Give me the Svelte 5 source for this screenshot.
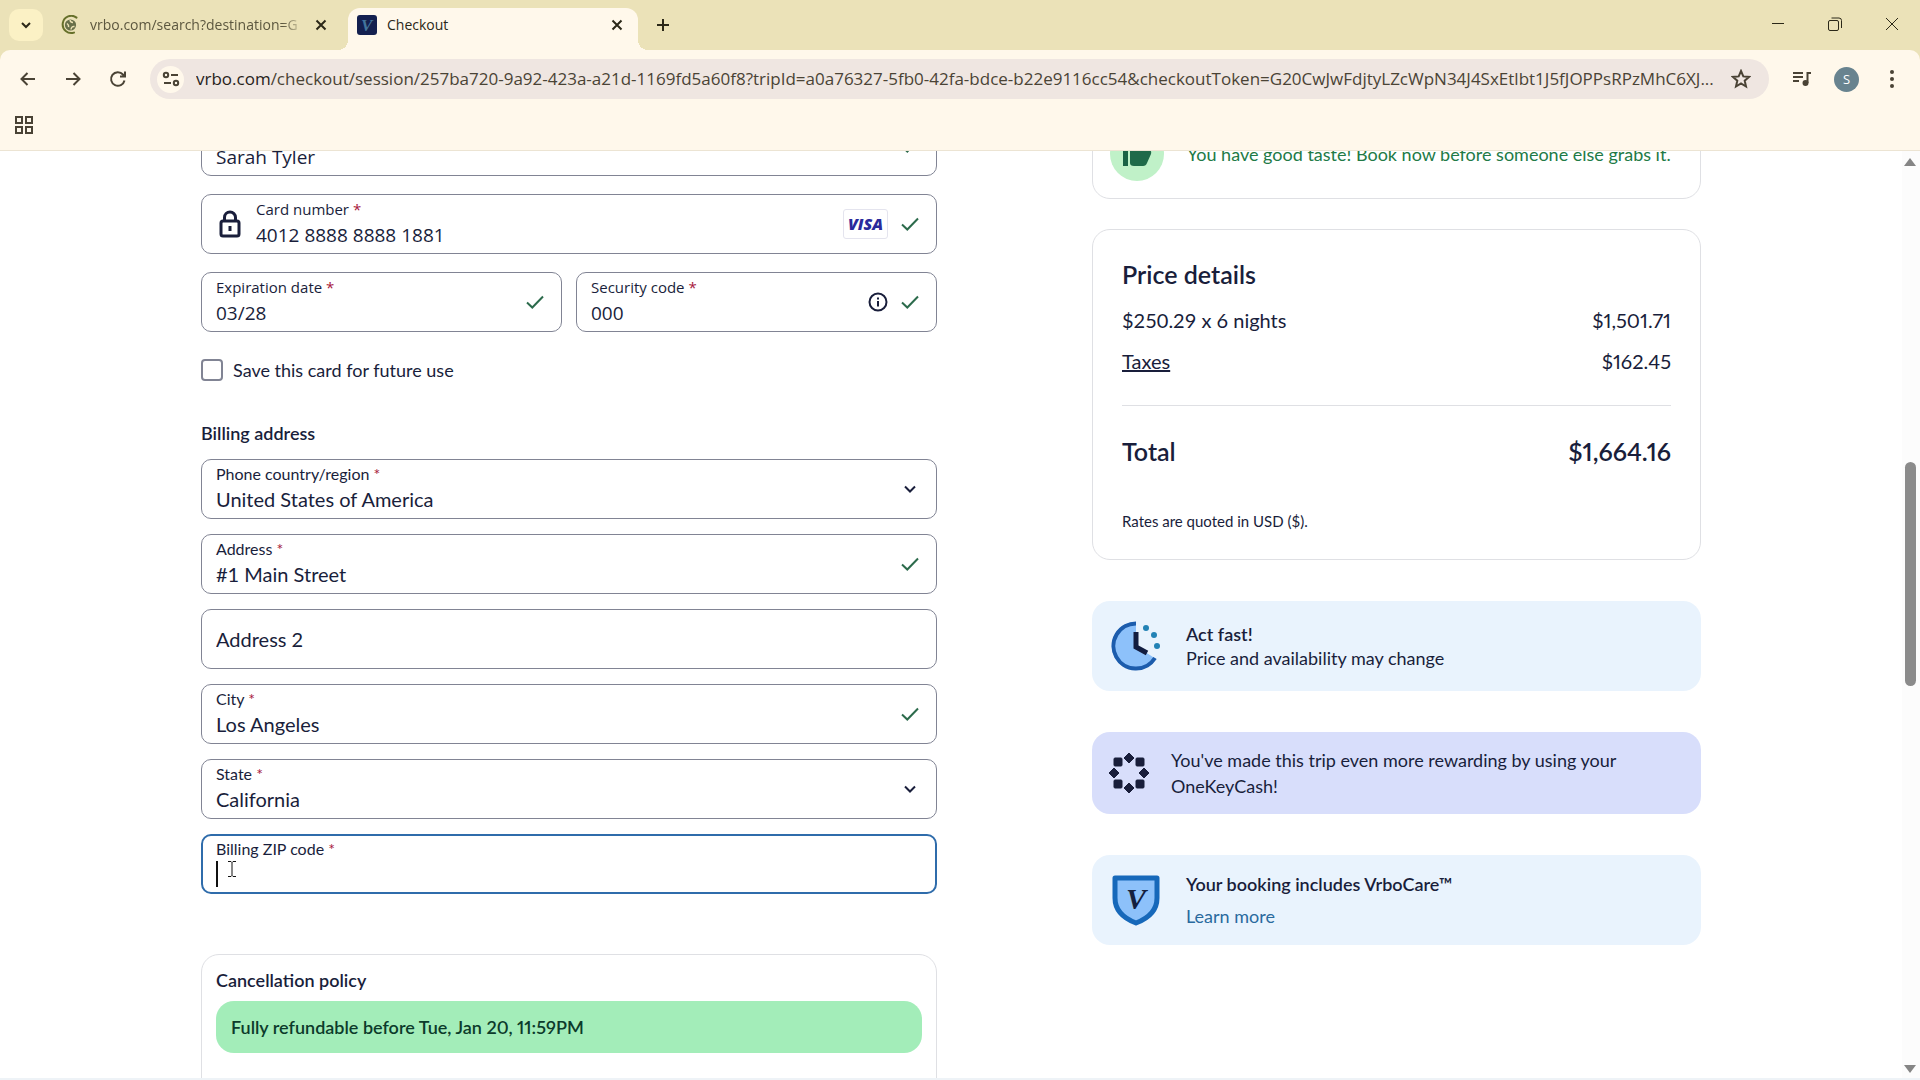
<script lang="ts">
	type Field = { id: string; label: string; value: string; required?: boolean; kind?: 'select' | 'text'; valid?: boolean };

	const billing: Field[] = [
		{ id: 'country', label: 'Phone country/region', value: 'United States of America', required: true, kind: 'select' },
		{ id: 'address', label: 'Address', value: '#1 Main Street', required: true, valid: true },
		{ id: 'address2', label: 'Address 2', value: '' },
		{ id: 'city', label: 'City', value: 'Los Angeles', required: true, valid: true },
		{ id: 'state', label: 'State', value: 'California', required: true, kind: 'select' },
	];

	const origin = 'vrbo.com';
	const path =
		'/checkout/session/257ba720-9a92-423a-a21d-1169fd5a60f8?tripId=a0a76327-5fb0-42fa-bdce-b22e9116cc54&checkoutToken=G20CwJwFdjtyLZcWpN34J4SxEtlbt1J5fJOPPsRPzMhC6XJ...';

	let saveCard = $state(false);
</script>

{#snippet check()}
	<svg class="check" width="20" height="20" viewBox="0 0 20 20" aria-hidden="true">
		<path d="M2 10.5 7.3 15.5 18 4.5" />
	</svg>
{/snippet}

{#snippet cross()}
	<svg width="14" height="14" viewBox="0 0 14 14" aria-hidden="true"><path d="M2.5 2.5 11.5 11.5M11.5 2.5 2.5 11.5" /></svg>
{/snippet}

{#snippet caption(id: string, text: string, required = true)}
	<label for={id}>{text}{#if required}<span class="star">{' *'}</span>{/if}</label>
{/snippet}

<div class="window">
	<div class="chrome">
		<header class="tabs">
			<button class="tab-search" aria-label="Search tabs">
				<svg width="12" height="12" viewBox="0 0 12 12"><path d="M2 4 6 8 10 4" /></svg>
			</button>
			<div class="tab">
				<svg class="favicon" width="20" height="20" viewBox="0 0 20 20" aria-hidden="true">
					<path d="M16.5 2.6A8.6 8.6 0 1 0 14 17.6" fill="none" stroke="#66702a" stroke-width="2" stroke-linecap="round" />
					<circle cx="10.5" cy="10" r="5.6" fill="#68704a" />
					<path d="M7 8.5Q9 10 8.6 12.2M10 5.2Q10.500 7.500 13 7.600M11 14.500Q11.500 11 14.500 11.500" fill="none" stroke="#ebe2b5" stroke-width="1.500" />
				</svg>
				<span class="tab-title faded">vrbo.com/search?destination=G</span>
				<button aria-label="Close search tab">{@render cross()}</button>
			</div>
			<div class="tab active">
				<svg class="favicon" width="20" height="20" viewBox="0 0 20 20" aria-hidden="true">
					<rect width="20" height="20" rx="3" fill="#14204f" />
					<text x="4" y="16" font-family="Liberation Serif, serif" font-size="17" font-style="italic" font-weight="700" fill="#42749c">V</text>
				</svg>
				<span class="tab-title">Checkout</span>
				<button aria-label="Close checkout tab">{@render cross()}</button>
			</div>
			<button class="new-tab" aria-label="New tab">
				<svg width="16" height="16" viewBox="0 0 16 16"><path d="M8 2V14M2 8H14" /></svg>
			</button>
			<div class="controls">
				<button aria-label="Minimize"><svg width="16" height="16" viewBox="0 0 16 16"><path d="M2 7.500H14" /></svg></button>
				<button aria-label="Restore">
					<svg width="16" height="16" viewBox="0 0 16 16"><rect x="1.500" y="4.500" width="10" height="10" rx="1.500" /><path d="M4.500 2H12Q14.500 2 14.500 4.500V12" /></svg>
				</button>
				<button aria-label="Close"><svg width="16" height="16" viewBox="0 0 16 16"><path d="M2 2 14 14M14 2 2 14" /></svg></button>
			</div>
		</header>

		<div class="toolbar">
			<button aria-label="Back"><svg width="20" height="20" viewBox="0 0 20 20"><path d="M17 10H4M9.500 4 3.500 10 9.500 16" /></svg></button>
			<button aria-label="Forward"><svg width="20" height="20" viewBox="0 0 20 20"><path d="M3 10H16M10.500 4 16.500 10 10.500 16" /></svg></button>
			<button aria-label="Reload">
				<svg width="20" height="20" viewBox="0 0 20 20"><path d="M16.500 11.500A6.800 6.800 0 1 1 15 5.500L17 7.500M17 2.500V7.500H12" /></svg>
			</button>
			<div class="omnibox">
				<button class="site-info" aria-label="View site information">
					<svg width="18" height="18" viewBox="0 0 18 18"><circle cx="4" cy="5" r="2.200" /><path d="M9 5H16M2 13H9" /><circle cx="14" cy="13" r="2.200" /></svg>
				</button>
				<div class="url"><b>{origin}</b>{path}</div>
				<button aria-label="Bookmark this page">
					<svg width="20" height="20" viewBox="0 0 20 20"><path d="M10 2 12.300 7.400 18 7.900 13.700 11.700 15 17.500 10 14.400 5 17.500 6.300 11.700 2 7.900 7.700 7.400Z" /></svg>
				</button>
			</div>
			<button aria-label="Media controls">
				<svg width="20" height="20" viewBox="0 0 20 20"><path d="M1 4H11M1 8H11M1 12H7M15.500 14V4H19" /><circle cx="13.500" cy="14" r="2" fill="currentColor" /></svg>
			</button>
			<button class="avatar" aria-label="Profile">S</button>
			<button aria-label="Menu">
				<svg width="20" height="20" viewBox="0 0 20 20"><g fill="currentColor" stroke="none"><circle cx="10" cy="3" r="2" /><circle cx="10" cy="10" r="2" /><circle cx="10" cy="17" r="2" /></g></svg>
			</button>
		</div>
		<div class="bookmarks">
			<button aria-label="Apps">
				<svg width="20" height="20" viewBox="0 0 20 20"><path d="M2 2H8V8H2ZM12 2H18V8H12ZM2 12H8V18H2ZM12 12H18V18H12Z" /></svg>
			</button>
		</div>
	</div>

	<div class="viewport">
		<main>
			<form>
				<div class="field">
					<div class="entry segoe">
						<input id="name" value="Sarah Tyler" aria-label="Name on card" />
					</div>
					{@render check()}
				</div>
				<div class="field">
					<svg class="lock" width="28" height="30" viewBox="0 0 28 30" aria-hidden="true">
						<rect x="5" y="12" width="18" height="15" rx="2" />
						<path d="M8.500 12V8.500A5.500 5.500 0 0 1 19.500 8.500V12M14 17V22" />
					</svg>
					<div class="entry segoe">
						{@render caption('card', 'Card number')}
						<input id="card" value="4012 8888 8888 1881" />
					</div>
					<span class="visa">VISA</span>
					{@render check()}
				</div>
				<div class="pair">
					<div class="field">
						<div class="entry segoe">
							{@render caption('expiry', 'Expiration date')}
							<input id="expiry" value="03/28" />
						</div>
						{@render check()}
					</div>
					<div class="field">
						<div class="entry segoe">
							{@render caption('cvv', 'Security code')}
							<input id="cvv" value="000" />
						</div>
						<svg class="info" width="20" height="20" viewBox="0 0 20 20" aria-hidden="true">
							<circle cx="10" cy="10" r="8.500" />
							<path d="M10 9V14.500M10 5.500V7.500" />
						</svg>
						{@render check()}
					</div>
				</div>
				<div class="save">
					<input type="checkbox" id="save" bind:checked={saveCard} />
					<label for="save">Save this card for future use</label>
				</div>

				<h3>Billing address</h3>
				<div class="billing">
					{#each billing as field (field.id)}
						<div class="field">
							{#if field.kind === 'select'}
								<div class="entry">
									{@render caption(field.id, field.label)}
									<select id={field.id}><option>{field.value}</option></select>
								</div>
								<svg class="chevron" width="20" height="20" viewBox="0 0 20 20" aria-hidden="true"><path d="M5 7.500 10 12.500 15 7.500" /></svg>
							{:else if field.value}
								<div class="entry">
									{@render caption(field.id, field.label, field.required)}
									<input id={field.id} value={field.value} />
								</div>
								{#if field.valid}{@render check()}{/if}
							{:else}
								<div class="entry">
									<input id={field.id} placeholder={field.label} aria-label={field.label} />
								</div>
							{/if}
						</div>
					{/each}
					<div class="field focused">
						<div class="entry">
							{@render caption('zip', 'Billing ZIP code')}
							<div class="caret-line">
								<i class="caret"></i>
								<input id="zip" />
							</div>
						</div>
						<svg class="pointer" width="10" height="18" viewBox="0 0 10 18" aria-hidden="true"><path d="M1 1.500H4L5 2.500 6 1.500H9M5 2.500V15.500M1 16.500H4L5 15.500 6 16.500H9" /></svg>
					</div>
				</div>

				<section class="policy">
					<h3>Cancellation policy</h3>
					<p>Fully refundable before Tue, Jan 20, 11:59PM</p>
				</section>
			</form>

			<aside>
				<section class="card taste">
					<svg width="56" height="56" viewBox="0 0 56 56" aria-hidden="true">
						<circle cx="28" cy="28" r="27" fill="#c0f1c8" />
						<path d="M14 24H19V40H14Z" fill="#1a6245" />
						<path d="M21 24 28 12Q33 12 32 18L31 23H39Q43 24 42 28L38 37Q37 40 34 40H25Q21 40 21 37Z" fill="#1f6a49" />
					</svg>
					<p>You have good taste! Book now before someone else grabs it.</p>
				</section>

				<section class="card price">
					<h2>Price details</h2>
					<div class="line"><span>$250.29 x 6 nights</span><span class="amount">$1,501.71</span></div>
					<div class="line"><a href="#taxes">Taxes</a><span class="amount">$162.45</span></div>
					<hr />
					<div class="total"><span>Total</span><span class="amount">$1,664.16</span></div>
					<small>Rates are quoted in USD ($).</small>
				</section>

				<section class="notice">
					<svg width="52" height="52" viewBox="0 0 52 52" aria-hidden="true">
						<path d="M26 26V2A24 24 0 1 0 46 39Z" fill="#8dc1fa" />
						<path d="M26 3.500A22.500 22.500 0 1 0 45 38" fill="none" stroke="#1c5cac" stroke-width="4" />
						<path d="M26 12V27L37 33" fill="none" stroke="#121d40" stroke-width="5" />
						<g fill="#2382b5"><circle cx="36" cy="8" r="3" /><circle cx="44" cy="15" r="3" /><circle cx="47" cy="26" r="3" /></g>
					</svg>
					<div>
						<strong>Act fast!</strong>
						<p>Price and availability may change</p>
					</div>
				</section>

				<section class="notice rewards">
					<svg width="42" height="42" viewBox="0 0 42 42" fill="#191e3b" stroke="#191e3b" stroke-linejoin="round" aria-hidden="true">
						<path d="M21 1 26 6 21 11 16 6ZM21 31 26 36 21 41 16 36ZM6 16 11 21 6 26 1 21ZM36 16 41 21 36 26 31 21Z" />
						<rect x="6" y="6" width="8" height="8" rx="1" /><rect x="28" y="6" width="8" height="8" rx="1" />
						<rect x="6" y="28" width="8" height="8" rx="1" /><rect x="28" y="28" width="8" height="8" rx="1" />
					</svg>
					<p>You've made this trip even more rewarding by using your OneKeyCash!</p>
				</section>

				<section class="notice care">
					<svg width="52" height="52" viewBox="0 0 52 52" aria-hidden="true">
						<path d="M5 4H47V24Q47 41 26 49Q5 41 5 24Z" fill="#8dc1fa" stroke="#1668ba" stroke-width="5" stroke-linejoin="round" />
						<text x="16" y="35" font-family="Liberation Serif, serif" font-size="30" font-style="italic" font-weight="700" fill="#14203f">V</text>
					</svg>
					<div>
						<strong>Your booking includes VrboCare™</strong>
						<a href="#learn-more">Learn more</a>
					</div>
				</section>
			</aside>
		</main>

		<div class="scrollbar" aria-hidden="true">
			<svg width="12" height="10" viewBox="0 0 12 10"><path d="M6 1 12 9H0Z" /></svg>
			<i class="thumb"></i>
			<svg width="12" height="10" viewBox="0 0 12 10"><path d="M6 9 12 1H0Z" /></svg>
		</div>
	</div>
</div>

<style>
	:global(body) {
		margin: 0;
		overflow: hidden;
	}
	.window {
		--ink: #191e3b;
		--strip: #ebe2b8;
		--bar: #fff8eb;
		--ui: 'Open Sans', 'Noto Sans', sans-serif;
		display: flex;
		flex-direction: column;
		height: 100vh;
		font-family: Lato, sans-serif;
		color: var(--ink);
		background: #fff;
	}
	h2, h3, p {
		margin: 0;
	}
	button {
		display: grid;
		place-items: center;
		padding: 0;
		border: 0;
		background: none;
		color: inherit;
	}
	svg {
		flex: none;
	}
	button svg {
		fill: none;
		stroke: currentColor;
		stroke-width: 2;
	}

	/* browser chrome */
	.chrome {
		background: var(--strip);
		font-family: var(--ui);
	}
	.tabs {
		display: flex;
		align-items: flex-end;
		height: 50px;
		color: #2b2818;
	}
	.tab-search {
		width: 34px;
		height: 32px;
		margin: 0 8px 9px 9px;
		border-radius: 10px;
		background: #fbf1c5;
	}
	.tab {
		display: flex;
		align-items: center;
		gap: 10px;
		box-sizing: border-box;
		width: 297px;
		height: 42px;
		padding: 0 20px 8px 9px;
	}
	.tab.active {
		position: relative;
		width: 290px;
		padding-right: 14px;
		border-radius: 12px 12px 0 0;
		background: var(--bar);
	}
	/* flared feet of the selected tab */
	.tab.active::before,
	.tab.active::after {
		content: '';
		position: absolute;
		bottom: 0;
		left: -10px;
		width: 10px;
		height: 10px;
		background: radial-gradient(circle at 0 0, transparent 10px, var(--bar) 10px);
	}
	.tab.active::after {
		left: 100%;
		background: radial-gradient(circle at 100% 0, transparent 10px, var(--bar) 10px);
	}
	.tab-title {
		flex: 1;
		overflow: hidden;
		font-size: 14px;
		line-height: 20px;
		white-space: nowrap;
	}
	.faded {
		color: #5c573f;
		mask-image: linear-gradient(90deg, #000 90%, transparent);
	}
	.new-tab {
		width: 32px;
		height: 32px;
		margin: 0 0 9px 9px;
	}
	.controls {
		display: flex;
		margin: 0 0 9px auto;
	}
	.controls button {
		width: 57px;
		height: 34px;
	}
	.controls svg {
		stroke-width: 1;
	}
	.toolbar {
		display: flex;
		align-items: center;
		gap: 12px;
		height: 58px;
		padding: 0 12px 0 11px;
		border-radius: 10px 10px 0 0;
		background: var(--bar);
		color: #4a4335;
	}
	.toolbar > button {
		width: 33px;
		height: 33px;
	}
	.omnibox {
		display: flex;
		flex: 1;
		align-items: center;
		gap: 12px;
		min-width: 0;
		height: 40px;
		margin: 0 4px;
		padding: 0 18px 0 7px;
		border-radius: 20px;
		background: #efe6e1;
	}
	.site-info {
		width: 27px;
		height: 27px;
		border-radius: 50%;
		background: var(--bar);
	}
	.url {
		flex: 1;
		overflow: hidden;
		font-size: 17px;
		line-height: 24px;
		white-space: nowrap;
	}
	.url b {
		font-weight: 400;
		color: #27221a;
	}
	.toolbar > .avatar {
		width: 25px;
		height: 25px;
		margin: 0 4px;
		border-radius: 50%;
		background: #68838f;
		color: #fff;
		font: 13px var(--ui);
	}
	.bookmarks {
		display: flex;
		align-items: center;
		height: 34px;
		padding: 0 14px 8px;
		border-bottom: 1px solid #ece4d3;
		background: var(--bar);
		color: #4a4335;
	}

	/* page */
	.viewport {
		display: flex;
		flex: 1;
		min-height: 0;
		overflow: hidden;
		border-bottom: 2px solid #eef3f7;
	}
	main {
		display: grid;
		flex: 1;
		grid-template-columns: 736fr 609fr;
		gap: 155px;
		max-width: 1500px;
		height: max-content;
		margin: -43px auto 0;
	}
	form {
		padding-top: 8px;
	}
	.field {
		position: relative;
		display: flex;
		align-items: center;
		gap: 12px;
		box-sizing: border-box;
		height: 60px;
		padding: 0 16px 0 14px;
		border: 1px solid #818494;
		border-radius: 10px;
	}
	form > .field,
	.pair {
		margin-bottom: 18px;
	}
	.pair {
		display: grid;
		grid-template-columns: 1fr 1fr;
		gap: 14px;
	}
	.entry {
		display: flex;
		flex: 1;
		flex-direction: column;
		min-width: 0;
	}
	.entry label {
		font-size: 16px;
		line-height: 20px;
	}
	.star {
		color: #a7183c;
		white-space: pre;
	}
	.entry input,
	.entry select {
		width: 100%;
		height: 30px;
		padding: 0;
		border: 0;
		outline: 0;
		background: none;
		appearance: none;
		color: inherit;
		font: 20px/30px Lato, sans-serif;
	}
	.entry input::placeholder {
		color: inherit;
		opacity: 1;
	}
	.entry.segoe label {
		font-family: var(--ui);
		font-size: 15px;
		line-height: 22px;
	}
	.entry.segoe input {
		font-family: var(--ui);
		font-size: 19px;
	}
	/* the name field is scrolled half out of view, its text sits low */
	.segoe input:first-child {
		padding-top: 22px;
		height: 52px;
		box-sizing: border-box;
	}
	.check {
		fill: none;
		stroke: #2c6b4c;
		stroke-width: 2;
	}
	.chevron,
	.info,
	.lock {
		fill: none;
		stroke: var(--ink);
		stroke-width: 2;
	}
	.lock {
		stroke-width: 3;
	}
	.visa {
		padding: 0 4px;
		border: 1px solid #e4e4ee;
		border-radius: 3px;
		color: #2a2a9c;
		font: italic 800 16px/28px 'Open Sans', sans-serif;
	}
	.focused {
		border: 2px solid #2f6cab;
		padding-left: 13px;
	}
	.caret-line {
		display: flex;
		align-items: center;
	}
	.caret {
		width: 2px;
		height: 26px;
		background: #111;
	}
	.pointer {
		position: absolute;
		left: 24px;
		top: 24px;
		fill: none;
		stroke: #111;
	}
	.save {
		display: flex;
		align-items: center;
		gap: 10px;
		margin: 26px 0 39px;
		font-size: 18px;
		line-height: 24px;
	}
	.save input {
		appearance: none;
		box-sizing: border-box;
		width: 22px;
		height: 22px;
		margin: 0;
		border: 2px solid #818494;
		border-radius: 4px;
	}
	h3,
	strong {
		font-size: 18px;
		font-weight: 600;
		line-height: 24px;
	}
	.billing {
		display: grid;
		gap: 15px;
		margin-top: 14px;
	}
	.policy {
		margin-top: 60px;
		padding: 13px 14px 60px;
		border: 1px solid #dfe0e4;
		border-radius: 18px;
	}
	.policy p {
		margin-top: 9px;
		padding: 14px 15px;
		border-radius: 18px;
		background: #a3edb9;
		color: #0c3b2b;
		font-size: 18px;
		font-variant-numeric: proportional-nums;
		font-weight: 600;
		line-height: 24px;
	}

	.card {
		box-sizing: border-box;
		border: 1px solid #dfe0e4;
		border-radius: 18px;
	}
	.taste {
		display: flex;
		align-items: center;
		gap: 22px;
		height: 91px;
		padding: 0 16px;
		color: #227a46;
		font-size: 18px;
	}
	.price {
		margin: 30px 0 41px;
		padding: 28px 29px;
	}
	h2,
	.total {
		font-size: 25px;
		font-weight: 600;
		line-height: 32px;
	}
	h2 {
		margin-bottom: 17px;
	}
	.line,
	.total {
		display: flex;
		justify-content: space-between;
	}
	.line {
		margin-bottom: 15px;
		font-size: 20px;
		line-height: 26px;
	}
	.line a {
		color: inherit;
	}
	.amount {
		font-variant-numeric: proportional-nums;
	}
	hr {
		height: 1px;
		margin: 31px 0 29px;
		border: 0;
		background: #dfe0e4;
	}
	small {
		display: block;
		margin-top: 44px;
		font-size: 15px;
		line-height: 20px;
	}
	.notice {
		display: flex;
		align-items: center;
		gap: 24px;
		box-sizing: border-box;
		min-height: 90px;
		margin-bottom: 41px;
		padding: 0 18px;
		border-radius: 18px;
		background: #e9f3fd;
		font-size: 18px;
		line-height: 24px;
	}
	.rewards {
		gap: 21px;
		min-height: 82px;
		padding: 0 16px;
		background: #d8defb;
		line-height: 26px;
	}
	.care a {
		display: block;
		margin-top: 8px;
		color: #2a6a9e;
		text-decoration: none;
	}

	.scrollbar {
		display: flex;
		flex-direction: column;
		align-items: center;
		justify-content: space-between;
		width: 12px;
		padding: 6px 4px 4px 2px;
		background: #fcfcfc;
		fill: #858585;
	}
	.thumb {
		width: 11px;
		height: 224px;
		margin-bottom: 84px;
		border-radius: 6px;
		background: #8b8b8b;
	}
</style>
